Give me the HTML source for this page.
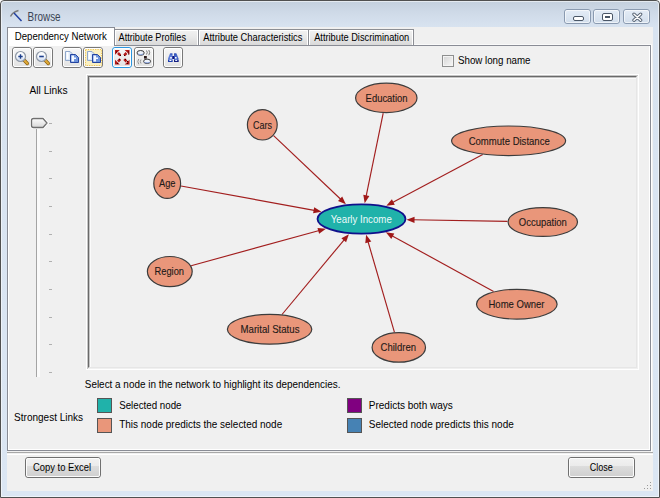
<!DOCTYPE html>
<html><head><meta charset="utf-8">
<style>
*{box-sizing:border-box;margin:0;padding:0}
html,body{width:660px;height:498px;overflow:hidden;background:#fff}
body{position:relative;font-family:"Liberation Sans",sans-serif;font-size:11px;color:#000}
.abs{position:absolute}
#win{position:absolute;left:0;top:0;width:660px;height:498px;border:1px solid #505050;border-radius:4px 4px 0 0;
 background:linear-gradient(#c4d0de 0px,#cfdae8 12px,#d8e3f0 26px,#dbe6f3 100%)}
#win:before{content:"";position:absolute;left:0;top:0;right:0;bottom:0;border:1px solid rgba(255,255,255,.55);border-radius:3px 3px 0 0}
#client{position:absolute;left:7px;top:27px;width:646px;height:464px;background:#f0f0f0}
.t{position:absolute;white-space:nowrap;line-height:13px}
.wbtn{position:absolute;top:9px;width:27px;height:15px;border:1px solid #8a9ab0;border-radius:3px;
 background:linear-gradient(#e4ecf6,#d2deec)}
.wbtn:before{content:"";position:absolute;left:0;top:0;right:0;bottom:0;border:1px solid rgba(255,255,255,.6);border-radius:2px}
.tab{position:absolute;top:29px;height:16px;border:1px solid #8c8e94;border-bottom:none;background:linear-gradient(#f2f2f2,#e8e8e8 50%,#d9d9d9)}
.tab:before{content:"";position:absolute;left:0;top:0;right:0;bottom:0;border:1px solid #fff;border-bottom:none}
.tb{position:absolute;top:47px;width:20px;height:21px;border:1px solid #787878;border-radius:3px;background:linear-gradient(#f7f7f7,#e2e2e2)}
.tb:before{content:"";position:absolute;left:0;top:0;right:0;bottom:0;border:1px solid #fff;border-radius:2px}
.tb svg{position:absolute;left:1px;top:1px}
.btn{position:absolute;top:457px;height:21px;border:1px solid #707070;border-radius:3px;
 background:linear-gradient(#f2f2f2 0%,#ebebeb 42%,#dddddd 42%,#cfcfcf 100%)}
.btn:before{content:"";position:absolute;left:0;top:0;right:0;bottom:0;border:1px solid #fcfcfc;border-radius:2px}
.sw{position:absolute;width:15px;height:15px;border:1px solid #555}
.tick{position:absolute;left:49px;width:3px;height:1px;background:#a8a8a8}
</style></head><body>
<div id="win"></div>

<!-- title -->

<div class="wbtn" style="left:564px"><div class="abs" style="left:8px;top:6px;width:11px;height:5px;border:1px solid #4a5666;border-radius:2px;background:#fff"></div></div>
<div class="wbtn" style="left:593px"><div class="abs" style="left:8px;top:3px;width:11px;height:8px;border:1px solid #4a5666;border-radius:2px;background:#fff"><div class="abs" style="left:2px;top:2px;width:5px;height:2px;border:1px solid #4a5666"></div></div></div>
<div class="wbtn" style="left:623px"><svg class="abs" style="left:7px;top:2px" width="13" height="11" viewBox="0 0 13 11"><path d="M3 2.2 L9.6 8.2 M9.6 2.2 L3 8.2" stroke="#5a6676" stroke-width="3.4" stroke-linecap="round"/><path d="M3 2.2 L9.6 8.2 M9.6 2.2 L3 8.2" stroke="#fff" stroke-width="1.5" stroke-linecap="round"/></svg></div>

<div id="client"></div>

<!-- tab page -->
<div class="abs" style="left:7px;top:45px;width:644px;height:406px;border:1px solid #898c95;background:#f0f0f0"></div>
<div class="abs" style="left:8px;top:46px;width:642px;height:404px;border:1px solid #fff;border-top:none"></div>
<div class="abs" style="left:651px;top:44px;width:1px;height:408px;background:#fff"></div>
<div class="abs" style="left:414px;top:44px;width:238px;height:1px;background:#fafafa"></div>
<!-- separator below tab -->
<div class="abs" style="left:7px;top:452px;width:646px;height:1px;background:#a8a8a8"></div>
<div class="abs" style="left:7px;top:454px;width:646px;height:1px;background:#fff"></div>

<!-- tabs -->
<div class="tab" style="left:114px;width:85px"></div>
<div class="tab" style="left:198px;width:111px"></div>
<div class="tab" style="left:308px;width:106px"></div>
<div class="abs" style="left:7px;top:27px;width:108px;height:19px;border:1px solid #898c95;border-bottom:none;background:#fff"></div>

<!-- toolbar -->
<div class="tb" style="left:12px"></div>
<div class="tb" style="left:33px"></div>
<div class="tb" style="left:62px"></div>
<div class="tb" style="left:83px"></div>
<div class="tb" style="left:112px;border-color:#2a96e0;box-shadow:inset 0 0 0 1px #7cc8f4"></div>
<div class="tb" style="left:134px"></div>
<div class="tb" style="left:163px"></div>

<!-- checkbox -->
<div class="abs" style="left:442px;top:55px;width:12px;height:12px;border:1px solid #8e8f8f;box-shadow:inset 0 0 0 1px #f4f4f4;background:linear-gradient(135deg,#d4d4d4,#f8f8f8)"></div>

<!-- slider -->
<div class="abs" style="left:36px;top:127px;width:4px;height:250px;border-left:1px solid #a4a4a4;background:#fafafa"></div>

<!-- graph panel -->
<div class="abs" style="left:86px;top:74px;width:553px;height:296px;border:1px solid #fff"></div>
<div class="abs" style="left:87px;top:75px;width:551px;height:294px;border-top:1px solid #c6c6c6;border-left:1px solid #c6c6c6"></div>
<div class="abs" style="left:88px;top:76px;width:549px;height:292px;border-top:1px solid #6a6a6a;border-left:1px solid #6a6a6a;border-right:1px solid #e6e6e6;border-bottom:1px solid #e6e6e6"></div>
<div class="abs" style="left:89px;top:77px;width:547px;height:290px;border-top:1px solid #c4c4c4;border-left:1px solid #c4c4c4"></div>
<div class="abs" style="left:90px;top:78px;width:546px;height:289px;border-top:1px solid #fbfbfb;border-left:1px solid #fbfbfb"></div>

<!-- legend -->
<div class="sw" style="left:97px;top:398px;background:#20b2aa"></div>
<div class="sw" style="left:97px;top:418px;background:#e9967a"></div>
<div class="sw" style="left:347px;top:398px;background:#800080"></div>
<div class="sw" style="left:347px;top:418px;background:#4682b4"></div>

<!-- buttons -->
<div class="btn" style="left:25px;width:76px"></div>
<div class="btn" style="left:568px;width:67px"></div>

<svg class="abs" style="left:0;top:0" width="660" height="498" viewBox="0 0 660 498" font-family="Liberation Sans, sans-serif">
<text x="27.6" y="20.6" textLength="33" lengthAdjust="spacingAndGlyphs" font-size="12" fill="#3a4454" >Browse</text>
<text x="14.8" y="39.5" textLength="92" lengthAdjust="spacingAndGlyphs" font-size="11" fill="#000" >Dependency Network</text>
<text x="118.5" y="41" textLength="67.5" lengthAdjust="spacingAndGlyphs" font-size="11" fill="#000" >Attribute Profiles</text>
<text x="203.3" y="41" textLength="99" lengthAdjust="spacingAndGlyphs" font-size="11" fill="#000" >Attribute Characteristics</text>
<text x="314.2" y="41" textLength="95" lengthAdjust="spacingAndGlyphs" font-size="11" fill="#000" >Attribute Discrimination</text>
<text x="458" y="63.7" textLength="72.5" lengthAdjust="spacingAndGlyphs" font-size="11" fill="#000" >Show long name</text>
<text x="29.5" y="93.5" textLength="38" lengthAdjust="spacingAndGlyphs" font-size="11" fill="#000" >All Links</text>
<text x="84.8" y="387.8" textLength="255.7" lengthAdjust="spacingAndGlyphs" font-size="11" fill="#000" >Select a node in the network to highlight its dependencies.</text>
<text x="14.1" y="420.7" textLength="69" lengthAdjust="spacingAndGlyphs" font-size="11" fill="#000" >Strongest Links</text>
<text x="119.2" y="409" textLength="62.3" lengthAdjust="spacingAndGlyphs" font-size="11" fill="#000" >Selected node</text>
<text x="119.2" y="428" textLength="163" lengthAdjust="spacingAndGlyphs" font-size="11" fill="#000" >This node predicts the selected node</text>
<text x="368.8" y="409" textLength="84" lengthAdjust="spacingAndGlyphs" font-size="11" fill="#000" >Predicts both ways</text>
<text x="368.8" y="428" textLength="145" lengthAdjust="spacingAndGlyphs" font-size="11" fill="#000" >Selected node predicts this node</text>
<text x="33" y="470.5" textLength="58" lengthAdjust="spacingAndGlyphs" font-size="11" fill="#000" >Copy to Excel</text>
<text x="589.7" y="470.5" textLength="23" lengthAdjust="spacingAndGlyphs" font-size="11" fill="#000" >Close</text>
<!-- title icon -->
<path d="M10.5 16.5 Q12.5 12 18.5 10.5" stroke="#7a7a7a" stroke-width="1.4" fill="none"/>
<path d="M14 13 L21.5 21" stroke="#1f3fa0" stroke-width="1.5" fill="none"/>
<!-- zoom in -->
<defs><linearGradient id="lg" x1="0" y1="0" x2="0" y2="1"><stop offset="0" stop-color="#ffffff"/><stop offset="0.55" stop-color="#f2f6fc"/><stop offset="1" stop-color="#c4d4ee"/></linearGradient></defs>
<g>
 <path d="M24 60 L27.3 63.5" stroke="#8a6010" stroke-width="3.4" stroke-linecap="round"/>
 <path d="M24 60 L27.3 63.5" stroke="#e0aa38" stroke-width="2" stroke-linecap="round"/>
 <circle cx="20.5" cy="56.5" r="5" fill="url(#lg)" stroke="#8e98a6" stroke-width="1.2"/>
 <path d="M18.3 56.5 H22.7 M20.5 54.3 V58.7" stroke="#1d3f8c" stroke-width="1.4"/>
</g>
<g>
 <path d="M45 60 L48.3 63.5" stroke="#8a6010" stroke-width="3.4" stroke-linecap="round"/>
 <path d="M45 60 L48.3 63.5" stroke="#e0aa38" stroke-width="2" stroke-linecap="round"/>
 <circle cx="41.5" cy="56.5" r="5" fill="url(#lg)" stroke="#8e98a6" stroke-width="1.2"/>
 <path d="M39.2 56.5 H43.8" stroke="#1d3f8c" stroke-width="1.6"/>
</g>
<!-- copy icons -->
<rect x="85.5" y="49.5" width="16" height="16" fill="#fbf0c0" stroke="#f2c64a" stroke-width="1" stroke-dasharray="1.2 1.2"/>
<g id="cp">
 <path d="M65.5 51.5 H70 L72 53.5 V60.5 H65.5 Z" fill="#dce8f8" stroke="#90a8cc" stroke-width="1"/>
 <rect x="66.5" y="52" width="2" height="7" fill="#fff"/>
 <path d="M70.5 54.5 H75.5 L78.5 57.5 V62.5 H70.5 Z" fill="#6e94dc" stroke="#2444a0" stroke-width="1"/>
 <rect x="71.5" y="55.5" width="2.5" height="6" fill="#f4f8ff"/>
 <rect x="74" y="57.5" width="2" height="1.5" fill="#f4f8ff"/>
</g>
<g>
 <path d="M87.5 51.5 H92 L94 53.5 V60.5 H87.5 Z" fill="#dce8f8" stroke="#90a8cc" stroke-width="1"/>
 <rect x="88.5" y="52" width="2" height="7" fill="#fff"/>
 <path d="M92.5 54.5 H97.5 L100.5 57.5 V62.5 H92.5 Z" fill="#6e94dc" stroke="#2444a0" stroke-width="1"/>
 <rect x="93.5" y="55.5" width="2.5" height="6" fill="#f4f8ff"/>
 <rect x="96" y="57.5" width="2" height="1.5" fill="#f4f8ff"/>
</g>
<!-- expand red arrows -->
<g fill="#b41818">
 <polygon points="115,50 119.8,50 115,54.8"/>
 <polygon points="129.5,50 124.7,50 129.5,54.8"/>
 <polygon points="115,64.5 119.8,64.5 115,59.7"/>
 <polygon points="129.5,64.5 124.7,64.5 129.5,59.7"/>
</g>
<g stroke="#b41818" stroke-width="2.5" stroke-linecap="butt">
 <path d="M118 53 L120.3 55.3 M126.5 53 L124.2 55.3 M118 61.5 L120.3 59.2 M126.5 61.5 L124.2 59.2"/>
</g>
<g fill="#3a0000">
 <rect x="116" y="51.5" width="1" height="1"/><rect x="120" y="55" width="1" height="1"/>
 <rect x="128" y="51.5" width="1" height="1"/><rect x="128" y="53.5" width="1" height="1"/><rect x="124" y="55" width="1" height="1"/>
 <rect x="119" y="59" width="1" height="1"/><rect x="117" y="63" width="1" height="1"/>
 <rect x="125" y="59" width="1" height="1"/><rect x="127" y="61" width="1" height="1"/><rect x="127" y="63" width="1" height="1"/>
</g>
<!-- layout icon -->
<g>
 <path d="M146.5 50.5 Q148 52.5 146.5 54.5 M148.8 50 Q150.6 52.6 148.8 55.2" stroke="#6a6a6a" stroke-width="0.9" fill="none"/>
 <path d="M141 59.5 Q139.5 61.5 141 63.5 M138.7 59 Q136.9 61.6 138.7 64.2" stroke="#8a8a8a" stroke-width="0.9" fill="none"/>
 <ellipse cx="140.6" cy="52.9" rx="3.6" ry="2.4" fill="#eef3fb" stroke="#3a3a3a" stroke-width="1"/>
 <path d="M138 54 Q140.6 55.4 143.2 54" stroke="#8aa4e0" stroke-width="1" fill="none"/>
 <ellipse cx="147.1" cy="61.3" rx="3.5" ry="2.2" fill="#eef3fb" stroke="#3a3a3a" stroke-width="1"/>
 <path d="M144.5 62.3 Q147.1 63.6 149.7 62.3" stroke="#8aa4e0" stroke-width="1" fill="none"/>
 <rect x="144" y="56" width="2.8" height="2.6" fill="#2a1a1a"/>
</g>
<!-- binoculars -->
<g>
 <polygon points="170,53.5 172.5,53.5 172.5,62 168,62 168,58.5" fill="#5c7cd8"/>
 <polygon points="174,53.5 176.5,53.5 178.5,58.5 178.5,62 174,62" fill="#4464c4"/>
 <rect x="168" y="60" width="4.5" height="2" fill="#2040b0"/>
 <rect x="174" y="60" width="4.5" height="2" fill="#141e80"/>
 <rect x="172.3" y="56" width="1.9" height="3" fill="#061080"/>
 <rect x="170.2" y="57" width="1.6" height="1.6" fill="#fff"/>
 <rect x="175" y="57" width="1.6" height="1.6" fill="#fff"/>
 <rect x="169.4" y="59.8" width="2" height="1.2" fill="#fff"/>
 <rect x="175.2" y="59.8" width="2" height="1.2" fill="#e8f0ff"/>
 <rect x="170.3" y="53.5" width="2" height="1" fill="#2a48b0"/>
 <rect x="174.2" y="53.5" width="2" height="1" fill="#2a48b0"/>
</g>
<!-- slider thumb -->
<defs><linearGradient id="thg" x1="0" y1="0" x2="0" y2="1"><stop offset="0" stop-color="#fdfdfd"/><stop offset="0.45" stop-color="#ececec"/><stop offset="1" stop-color="#d8d8d8"/></linearGradient></defs>
<path d="M31.5 120.5 Q31.5 118.5 33.5 118.5 H43 L47 123 L43 127.5 H33.5 Q31.5 127.5 31.5 125.5 Z" fill="none" stroke="#fff" stroke-width="3"/>
<path d="M31.5 120.5 Q31.5 118.5 33.5 118.5 H43 L47 123 L43 127.5 H33.5 Q31.5 127.5 31.5 125.5 Z" fill="url(#thg)" stroke="#707070" stroke-width="1.3"/>
<g fill="#b0b0b0">
 <rect x="49" y="123" width="3" height="1"/><rect x="49" y="151" width="3" height="1"/><rect x="49" y="178" width="3" height="1"/>
 <rect x="49" y="206" width="3" height="1"/><rect x="49" y="234" width="3" height="1"/><rect x="49" y="261" width="3" height="1"/>
 <rect x="49" y="289" width="3" height="1"/><rect x="49" y="317" width="3" height="1"/><rect x="49" y="344" width="3" height="1"/>
 <rect x="49" y="372" width="3" height="1"/>
</g>
<!-- size grip -->
<g fill="#9a9a9a">
 <rect x="650" y="482" width="1" height="1"/>
 <rect x="647" y="485" width="1" height="1"/><rect x="650" y="485" width="1" height="1"/>
 <rect x="644" y="488" width="1" height="1"/><rect x="647" y="488" width="1" height="1"/><rect x="650" y="488" width="1" height="1"/>
</g>

<g stroke="#a21e1e" stroke-width="1.15"><line x1="383.2" y1="113.1" x2="365.9" y2="197.4"/><line x1="482.7" y1="154.6" x2="391.6" y2="203.0"/><line x1="273.6" y1="135.6" x2="341.5" y2="200.0"/><line x1="181.0" y1="186.0" x2="315.6" y2="210.6"/><line x1="507.5" y1="221.4" x2="412.5" y2="219.8"/><line x1="191.1" y1="265.7" x2="320.2" y2="230.3"/><line x1="282.0" y1="314.5" x2="345.0" y2="238.8"/><line x1="394.4" y1="332.2" x2="367.7" y2="240.5"/><line x1="493.6" y1="291.4" x2="391.0" y2="235.2"/></g>
<g fill="#a01818"><polygon points="364.7,203.2 363.3,194.8 369.4,196.0"/><polygon points="386.3,205.8 391.9,199.3 394.8,204.8"/><polygon points="345.9,204.2 338.0,200.9 342.2,196.4"/><polygon points="321.5,211.7 313.1,213.3 314.2,207.2"/><polygon points="406.5,219.7 414.6,216.8 414.5,223.0"/><polygon points="326.0,228.7 319.1,233.8 317.5,227.9"/><polygon points="348.9,234.2 346.1,242.3 341.4,238.3"/><polygon points="366.1,234.7 371.3,241.5 365.3,243.3"/><polygon points="385.8,232.3 394.3,233.4 391.3,238.9"/></g>
<g fill="#e9967a" stroke="#3c3c3c" stroke-width="1.2">
<ellipse cx="386.3" cy="97.9" rx="30.7" ry="14.7"/>
<ellipse cx="508.6" cy="140.8" rx="57.0" ry="14.8"/>
<ellipse cx="262.3" cy="124.8" rx="14.9" ry="15.2"/>
<ellipse cx="167.2" cy="183.5" rx="13.4" ry="14.9"/>
<ellipse cx="542.8" cy="222" rx="34.7" ry="14.4"/>
<ellipse cx="169.8" cy="271.6" rx="22.4" ry="15.1"/>
<ellipse cx="269.6" cy="329.3" rx="42.2" ry="14.9"/>
<ellipse cx="398.8" cy="347.4" rx="26.7" ry="14.8"/>
<ellipse cx="516.8" cy="304.2" rx="40.3" ry="14.9"/>
</g>
<ellipse cx="361.5" cy="219" rx="44.0" ry="14.7" fill="#20b2aa" stroke="#10108c" stroke-width="1.8"/>
<g font-size="10.5" fill="#1e1a18" stroke="#1e1a18" stroke-width="0.12">
<text x="365.6" y="101.6" textLength="42" lengthAdjust="spacingAndGlyphs">Education</text>
<text x="468.7" y="144.5" textLength="81" lengthAdjust="spacingAndGlyphs">Commute Distance</text>
<text x="253" y="128.6" textLength="19" lengthAdjust="spacingAndGlyphs">Cars</text>
<text x="159" y="186.9" textLength="16.5" lengthAdjust="spacingAndGlyphs">Age</text>
<text x="518.8" y="226" textLength="48" lengthAdjust="spacingAndGlyphs">Occupation</text>
<text x="154.5" y="275" textLength="29.5" lengthAdjust="spacingAndGlyphs">Region</text>
<text x="240.5" y="332.7" textLength="59" lengthAdjust="spacingAndGlyphs">Marital Status</text>
<text x="380.6" y="351.4" textLength="35.4" lengthAdjust="spacingAndGlyphs">Children</text>
<text x="488.5" y="308" textLength="56" lengthAdjust="spacingAndGlyphs">Home Owner</text>
</g>
<text x="330.8" y="222.5" textLength="61" lengthAdjust="spacingAndGlyphs" font-size="10.5" fill="#eefafa">Yearly Income</text>
</svg>
</body></html>
